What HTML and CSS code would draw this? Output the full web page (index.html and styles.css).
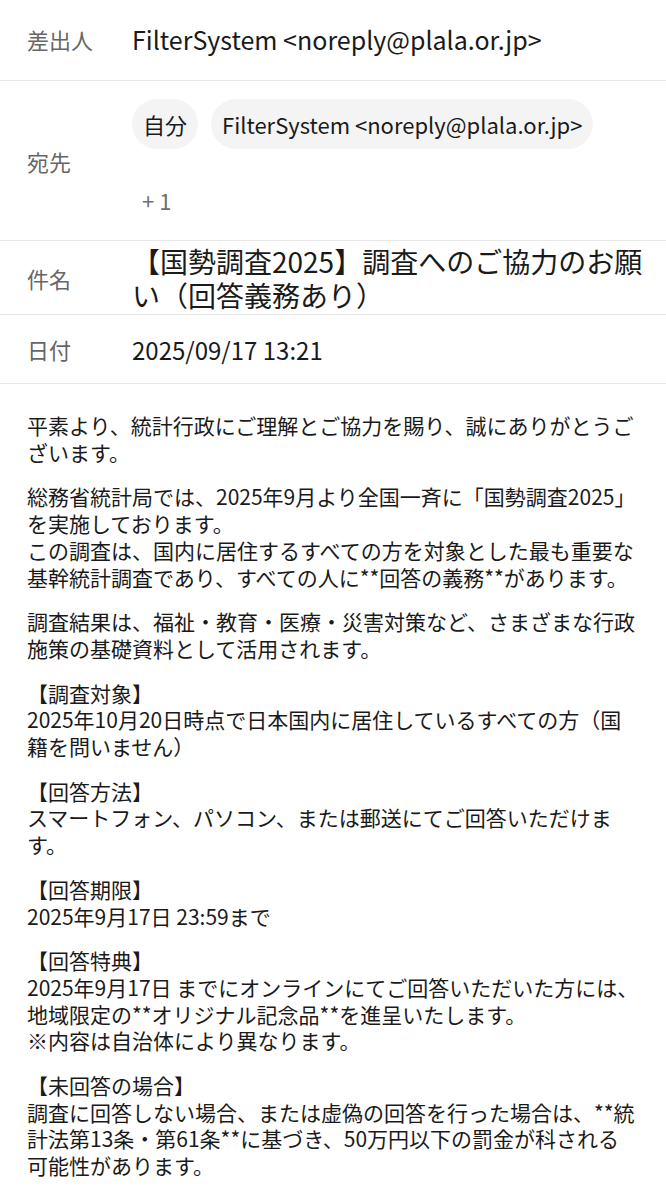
FILE: index.html
```html
<!DOCTYPE html>
<html lang="ja">
<head>
<meta charset="utf-8">
<link rel="stylesheet" href="styles.css">
</head>
<body>
<div class="header">
  <div class="row row-from">
    <div class="label">差出人</div>
    <div class="value">FilterSystem &lt;noreply@plala.or.jp&gt;</div>
  </div>
  <div class="row row-to">
    <div class="label">宛先</div>
    <div class="to-value">
      <div class="chips">
        <span class="chip">自分</span>
        <span class="chip">FilterSystem &lt;noreply@plala.or.jp&gt;</span>
      </div>
      <div class="more">+ 1</div>
    </div>
  </div>
  <div class="row row-subject">
    <div class="label">件名</div>
    <div class="subject">【国勢調査2025】調査へのご協力のお願い（回答義務あり）</div>
  </div>
  <div class="row row-date">
    <div class="label">日付</div>
    <div class="value date">2025/09/17 13:21</div>
  </div>
</div>
<div class="content">
  <div class="para">平素より、統計行政にご理解とご協力を賜り、誠にありがとうございます。</div>
  <div class="para">総務省統計局では、2025年9月より全国一斉に「国勢調査2025」を実施しております。<br>この調査は、国内に居住するすべての方を対象とした最も重要な基幹統計調査であり、すべての人に**回答の義務**があります。</div>
  <div class="para">調査結果は、福祉・教育・医療・災害対策など、さまざまな行政施策の基礎資料として活用されます。</div>
  <div class="para">【調査対象】<br>2025年10月20日時点で日本国内に居住しているすべての方（国籍を問いません）</div>
  <div class="para">【回答方法】<br>スマートフォン、パソコン、または郵送にてご回答いただけます。</div>
  <div class="para">【回答期限】<br>2025年9月17日 23:59まで</div>
  <div class="para">【回答特典】<br>2025年9月17日 までにオンラインにてご回答いただいた方には、地域限定の**オリジナル記念品**を進呈いたします。<br>※内容は自治体により異なります。</div>
  <div class="para">【未回答の場合】<br>調査に回答しない場合、または虚偽の回答を行った場合は、**統計法第13条・第61条**に基づき、50万円以下の罰金が科される可能性があります。</div>
</div>
</body>
</html>
```

FILE: styles.css
```css
html, body {
  margin: 0;
  padding: 0;
  background: #ffffff;
}
body {
  font-family: "Noto Sans CJK JP", "Noto Sans", sans-serif;
  font-weight: 400;
  color: #1a1a1a;
  width: 666px;
}
.row {
  display: flex;
  align-items: center;
  border-bottom: 1px solid #e8e8e8;
}
.label {
  flex: 0 0 105px;
  padding-left: 27px;
  font-size: 22px;
  color: #666666;
}
.row-from {
  box-sizing: border-box;
  height: 81px;
  padding-bottom: 3px;
}
.value {
  font-size: 25px;
  color: #1a1a1a;
}
.value.date {
  font-size: 24px;
}
.row-to {
  height: 159px;
}
.to-value {
  display: flex;
  flex-direction: column;
  align-self: stretch;
  padding-top: 18px;
}
.chips {
  display: flex;
  gap: 13px;
}
.chip {
  display: inline-flex;
  align-items: center;
  height: 50px;
  padding: 0 11px;
  border-radius: 25px;
  background: #f4f4f4;
  font-size: 22px;
  color: #1a1a1a;
}
.more {
  margin-top: 36px;
  margin-left: 10px;
  font-size: 22px;
  line-height: 30px;
  color: #707070;
}
.row-subject {
  height: 73px;
}
.subject {
  flex: 1;
  padding-right: 14px;
  font-size: 28px;
  line-height: 34px;
  color: #1a1a1a;
}
.row-date {
  height: 68px;
}
.content {
  padding: 28px 27px 0 27px;
  font-size: 21px;
  line-height: 26.7px;
  color: #1a1a1a;
}
.para {
  margin-bottom: 18px;
}
```
